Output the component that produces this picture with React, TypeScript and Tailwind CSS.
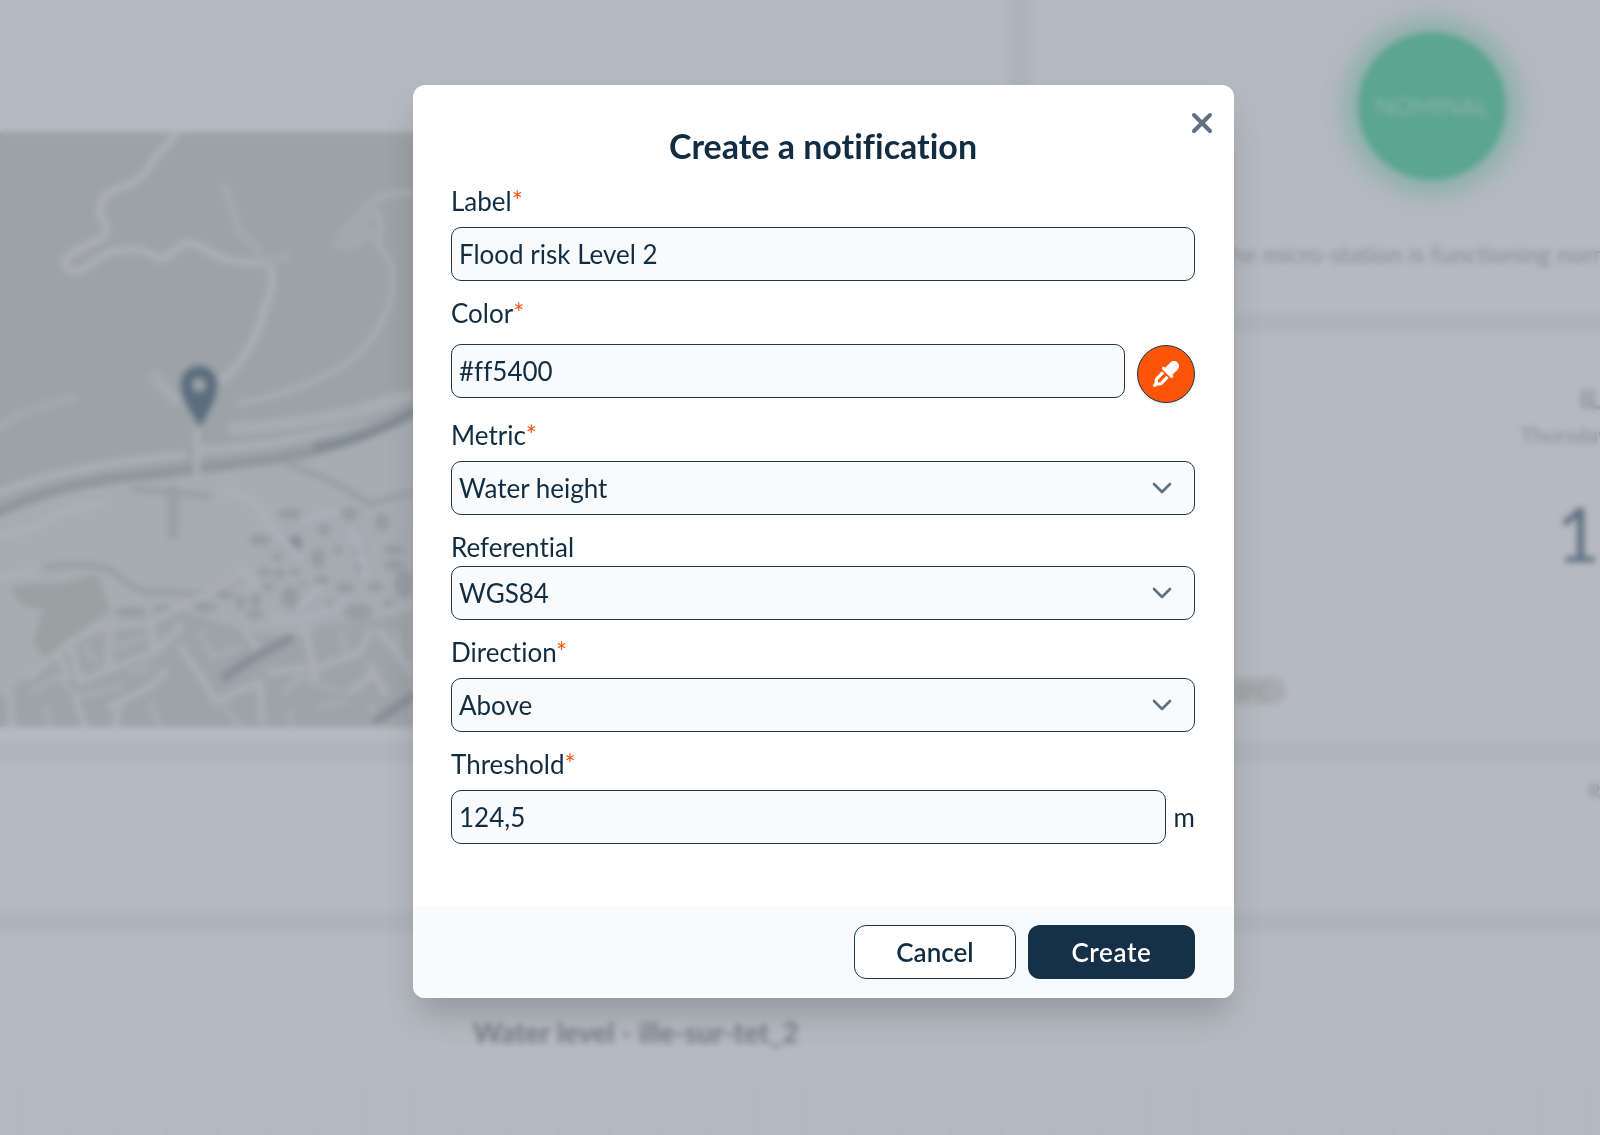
import { useState } from "react";
import type { ReactNode } from "react";
import { ChevronDown, X } from "lucide-react";
import { FaEyeDropper } from "react-icons/fa6";

const fieldClass =
  "h-[54px] w-full min-w-0 rounded-[10px] border border-[#1d384c] bg-[#f9fafc] px-[7px] text-[26px] text-[#122d42] focus:outline-none";

// Dunkle Flecken im Stadtgebiet: x, y, rx, ry
const blocks = [
  [260, 408, 11, 6],
  [290, 382, 12, 6],
  [295, 412, 8, 10],
  [324, 398, 7, 6],
  [350, 382, 9, 7],
  [382, 390, 7, 10],
  [318, 426, 7, 10],
  [338, 418, 5, 4],
  [360, 419, 8, 4],
  [394, 418, 11, 5],
  [394, 433, 11, 5],
  [265, 440, 6, 5],
  [280, 442, 6, 5],
  [278, 425, 5, 4],
  [295, 440, 5, 4],
  [303, 452, 4, 3],
  [322, 448, 8, 5],
  [345, 456, 10, 5],
  [375, 455, 8, 5],
  [290, 465, 9, 11],
  [255, 468, 6, 7],
  [240, 470, 5, 8],
  [330, 472, 5, 4],
  [205, 475, 12, 5],
  [255, 482, 9, 5],
  [390, 474, 7, 6],
  [358, 480, 14, 8],
  [404, 452, 10, 14],
  [362, 436, 7, 5],
  [268, 455, 6, 4],
  [225, 463, 10, 4],
  [130, 480, 16, 5],
  [165, 478, 12, 5],
];

function CityMap() {
  return (
    <svg
      className="block h-[595px] w-full bg-[#9ca2a5]"
      viewBox="0 0 1008 595"
      preserveAspectRatio="xMinYMin slice"
      fill="none"
      strokeLinecap="round"
      strokeLinejoin="round"
    >
      <path
        d="M0 380C43 355 90 350 150 343L283 326Q350 312 412 281L1008 120V595H0Z"
        fill="#a7acb0"
      />
      <path
        d="M0 565L60 520L110 490L180 478L250 500L300 505L360 470L412 480V595H0Z"
        fill="#9da3a6"
      />
      <path
        d="M250 440L275 400L330 372L380 378L412 400V480L360 490L300 495L260 475Z"
        fill="#a6abb2"
      />
      <path
        d="M10 454L35 452L60 452L97 442L110 478L80 500L45 528L33 510L43 478L22 474Z"
        fill="#99a1a2"
      />
      {/* Uferstreifen */}
      <path d="M235 297Q330 292 400 266" stroke="#a8adb4" strokeWidth="14" />
      <path d="M0 361Q60 335 183 323M203 318Q330 312 412 262" stroke="#a9aeb2" strokeWidth="9" />
      <path d="M203 307Q330 302 412 272" stroke="#9aa0a5" strokeWidth="4" />
      <path d="M0 380Q60 350 150 343L283 326Q350 314 412 281" stroke="#90979c" strokeWidth="10" />
      <path d="M317 315Q370 306 412 281" stroke="#7f8994" strokeWidth="8" />
      {/* Strassen */}
      <path
        d="M177 0C165 20 158 18 150 33C142 52 120 54 107 62C98 72 98 80 104 90C110 100 106 104 95 109C80 117 65 122 65 131C66 141 78 142 88 134C100 126 108 118 125 118C145 116 150 122 160 127C173 127 175 111 190 111C200 112 210 122 225 127C240 131 255 131 267 130C275 145 273 155 266 172C260 200 248 225 223 248"
        stroke="#abafb5"
        strokeWidth="8"
      />
      <path
        d="M412 61C390 61 373 64 373 72C378 85 384 98 377 111C395 130 395 145 389 175C375 205 360 225 335 238C300 256 280 264 240 271"
        stroke="#a8adb2"
        strokeWidth="6"
      />
      <path d="M0 295Q25 275 75 266M225 55L240 100L260 120M287 124L267 130" stroke="#a4a9ad" strokeWidth="8" />
      <path d="M370 75L340 110M350 112L368 100" stroke="#a3a8ac" strokeWidth="16" />
      <path d="M155 245L175 268" stroke="#a5aaae" strokeWidth="12" />
      <path d="M173 358V402" stroke="#9aa0a3" strokeWidth="12" />
      <path d="M135 357Q170 360 207 364M46 436Q90 428 115 440Q135 462 160 460L200 462Q230 455 245 445M290 334Q330 345 370 372L412 360" stroke="#999fa4" strokeWidth="7" />
      <path d="M197 298V344" stroke="#abafb4" strokeWidth="6" />
      {blocks.map(([x, y, rx, ry]) => (
        <ellipse key={`${x}-${y}`} cx={x} cy={y} rx={rx} ry={ry} fill="#969ca1" />
      ))}
      <ellipse cx="295" cy="412" rx="6" ry="7" fill="#858c97" />
      <path
        d="M240 435L256 455M300 475L320 455M275 485Q300 495 345 470M305 388L335 378M350 400Q365 420 365 445M0 402Q40 400 60 380L100 372M0 445L35 440M225 360Q255 360 270 395L300 425"
        stroke="#abb0b9"
        strokeWidth="7"
      />
      <path
        d="M30 545Q70 505 105 495L150 490L190 470L240 445M70 510L80 550L115 535L155 520L180 495M110 500L108 535M150 490L155 520M180 515L205 550L215 570L260 550L262 590M305 495L315 545M245 500L260 520M270 540L320 535L360 520L370 500M110 575L150 555L165 540M75 565L85 595M120 570L115 595M10 560L12 595M370 535L385 560M350 560L370 545M380 500L412 540M385 480L412 470M60 525L68 545"
        stroke="#abafb4"
        strokeWidth="7"
      />
      <path
        d="M85 515L95 530M118 515L145 505M30 560L60 545L75 565L120 555M45 575L50 595M150 570L160 595M200 500L212 525L240 515M225 575L240 595M285 560L300 545L340 560M320 575L345 570M290 580L292 595M370 575L380 590M395 500L400 520M340 500L345 520M130 540L150 535"
        stroke="#a8adb1"
        strokeWidth="5"
      />
      <path d="M225 545L250 528L290 506M377 588L412 565" stroke="#878e9a" strokeWidth="9" />
      {/* Standort */}
      <path
        fillRule="evenodd"
        d="M199 234C188 234 181 242 181 253C181 266 190 278 200 295C210 278 217 266 217 253C217 242 210 234 199 234ZM199 246A7 7 0 1 1 199 260A7 7 0 1 1 199 246Z"
        fill="#5b6e7f"
      />
    </svg>
  );
}

function Dashboard() {
  return (
    <div
      aria-hidden="true"
      className="flex min-h-screen flex-col gap-5 overflow-hidden whitespace-nowrap bg-[#adb4bc] text-[#8b9196]"
    >
      <div className="grid grid-cols-[63%_50%] gap-6">
        <div className="bg-[#b5b9c1] pb-[15px] pt-[132px]">
          <CityMap />
        </div>
        <div className="flex flex-col gap-5">
          <div className="flex h-[313px] flex-col items-center bg-[#b5b9c1] pt-8">
            <div className="flex h-[148px] w-[148px] items-center justify-center rounded-full bg-[#5ca58f] text-2xl text-[#8bb3a8] shadow-[0_0_20px_16px_#90b1ab]">
              NOMINAL
            </div>
            <p className="mt-[58px] text-2xl">
              The micro-station is functioning normally
            </p>
          </div>
          <div className="flex grow flex-col bg-[#b5b9c1] pl-[488px] pt-[50px]">
            <p className="pl-[60px] text-[26px] font-bold leading-8">IL</p>
            <p className="text-[22px] leading-10">Thursday</p>
            <p className="pl-9 pt-8 text-[76px] leading-[92px] text-[#5b6e7f]">1</p>
            <span className="-ml-[310px] mt-[98px] flex h-7 w-[76px] items-center justify-end rounded-full bg-[#a8acaf] pr-4 text-xl">
              0°C
            </span>
          </div>
        </div>
      </div>
      <div className="h-[150px] bg-[#b5b9c1] pt-[14px]">
        <p className="ml-auto w-3 overflow-hidden text-xl">R</p>
      </div>
      <div className="flex grow flex-col bg-[#b5b9c1] pt-[82px]">
        <p className="pl-[473px] text-[28px] font-bold leading-9 text-[#757c87]">
          Water level - ille-sur-tet_2
        </p>
        <div className="ml-5 mt-9 grow bg-[repeating-linear-gradient(90deg,#abb0b8_0_1px,transparent_1px_49px)]" />
      </div>
    </div>
  );
}

function Field({
  id,
  label,
  required = true,
  gap = "mb-2",
  children,
}: {
  id: string;
  label: string;
  required?: boolean;
  gap?: string;
  children: ReactNode;
}) {
  return (
    <div>
      <label htmlFor={id} className={`block leading-9 ${gap}`}>
        {label}
        {required && <span className="text-[#fa5310]">*</span>}
      </label>
      {children}
    </div>
  );
}

function Select({ id, options }: { id: string; options: string[] }) {
  return (
    <div className="relative">
      <select id={id} className={`block appearance-none ${fieldClass}`}>
        {options.map((option) => (
          <option key={option}>{option}</option>
        ))}
      </select>
      <ChevronDown
        size={32}
        className="pointer-events-none absolute right-[17px] top-[11px] text-[#5f7284]"
      />
    </div>
  );
}

function App() {
  const [label, setLabel] = useState("Flood risk Level 2");
  const [color, setColor] = useState("#ff5400");
  const [threshold, setThreshold] = useState("124,5");

  return (
    <div className="relative overflow-hidden font-['Lato','Open_Sans',sans-serif] [font-variant-ligatures:none]">
      <Dashboard />

      <div className="absolute inset-0 flex items-start justify-center pl-[47px] pt-[85px] backdrop-blur-[3px]">
        <form
          role="dialog"
          aria-labelledby="dialog-title"
          onSubmit={(e) => e.preventDefault()}
          className="relative w-full max-w-[821px] overflow-hidden rounded-xl bg-white text-[26px] text-[#122d42] shadow-[0_20px_32px_-6px_rgba(70,80,70,0.32)]"
        >
          <button
            type="button"
            aria-label="Close"
            className="absolute right-4 top-[22px] text-[#5f7284]"
          >
            <X size={32} strokeWidth={3} />
          </button>

          <div className="flex flex-col gap-[14px] pb-[62px] pl-[38px] pr-[39px] pt-[41px]">
            <h2 id="dialog-title" className="mb-[3px] text-center text-[34px] font-bold leading-10">
              Create a notification
            </h2>

            <Field id="label" label="Label">
              <input
                id="label"
                className={`block ${fieldClass}`}
                value={label}
                onChange={(e) => setLabel(e.target.value)}
              />
            </Field>

            <Field id="color" label="Color" gap="mb-[13px]">
              <div className="flex items-start gap-3">
                <input
                  id="color"
                  className={fieldClass}
                  value={color}
                  onChange={(e) => setColor(e.target.value)}
                />
                <button
                  type="button"
                  aria-label="Pick a color"
                  className="mt-px flex h-[58px] w-[58px] shrink-0 items-center justify-center rounded-full border border-[#1d384c] bg-[#fc5508] text-white shadow-sm"
                >
                  <FaEyeDropper size={26} />
                </button>
              </div>
            </Field>

            <Field id="metric" label="Metric">
              <Select id="metric" options={["Water height"]} />
            </Field>

            <Field id="referential" label="Referential" required={false} gap="mb-px">
              <Select id="referential" options={["WGS84"]} />
            </Field>

            <Field id="direction" label="Direction">
              <Select id="direction" options={["Above", "Below"]} />
            </Field>

            <Field id="threshold" label="Threshold">
              <div className="flex items-center gap-2">
                <input
                  id="threshold"
                  className={fieldClass}
                  value={threshold}
                  onChange={(e) => setThreshold(e.target.value)}
                />
                <span>m</span>
              </div>
            </Field>
          </div>

          <div className="flex justify-end gap-3 bg-[#f9fafc] px-[39px] py-[19px]">
            <button
              type="button"
              className="h-[54px] w-[162px] rounded-xl border border-[#1d384c] bg-white font-semibold"
            >
              Cancel
            </button>
            <button
              type="submit"
              className="h-[54px] w-[167px] rounded-xl bg-[#163147] font-semibold tracking-wide text-white"
            >
              Create
            </button>
          </div>
        </form>
      </div>
    </div>
  );
}

export default App;
